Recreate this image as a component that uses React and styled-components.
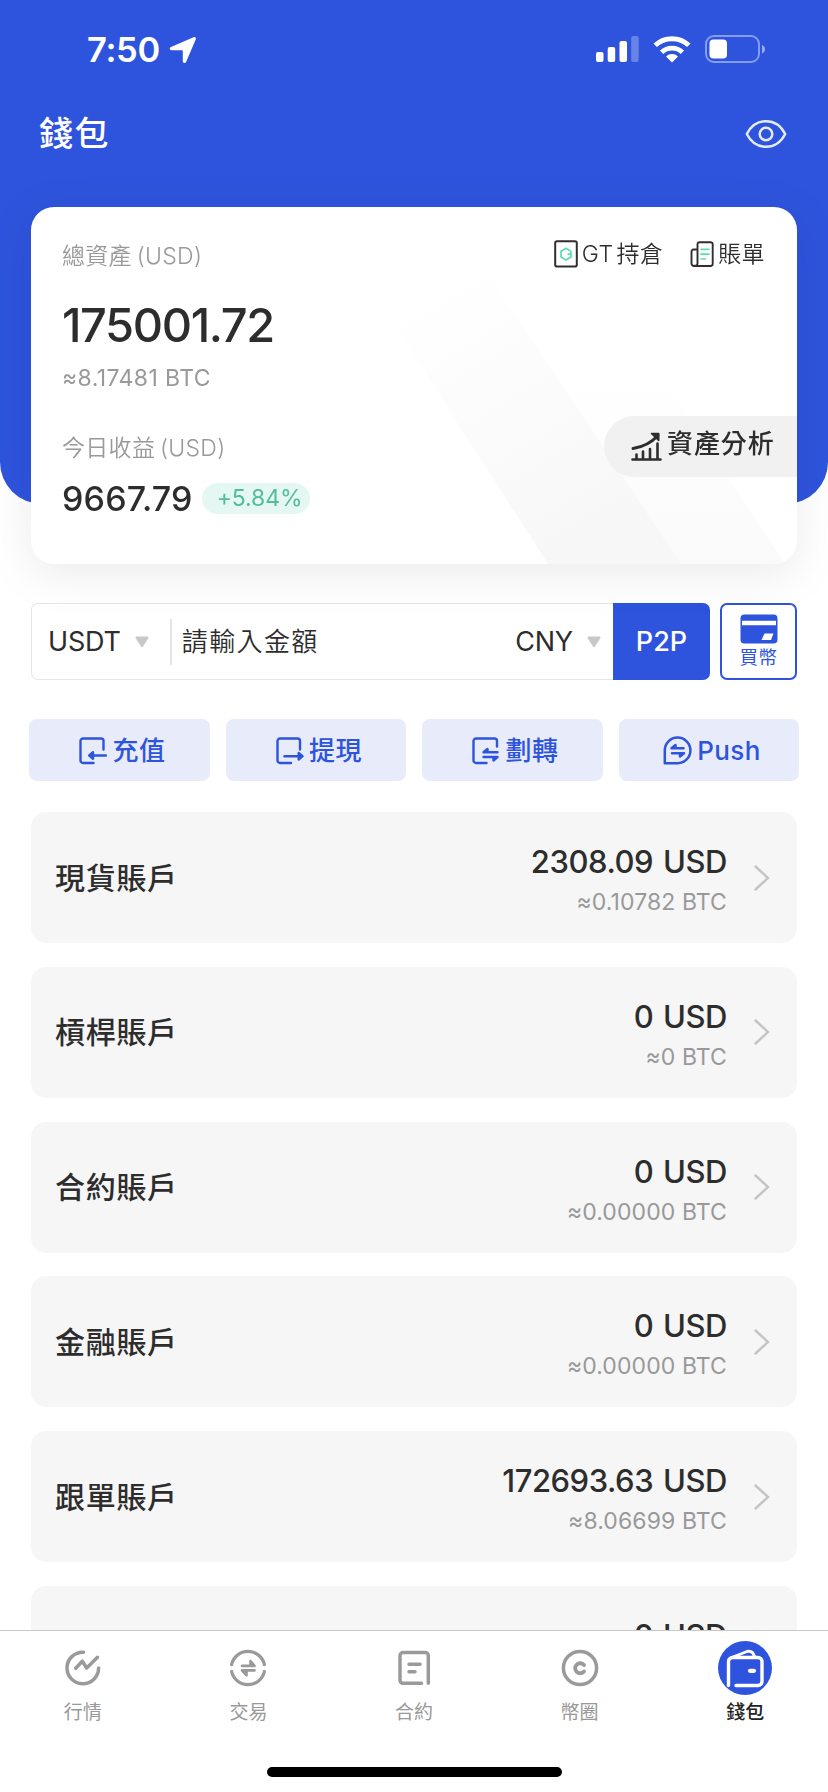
import styled, { createGlobalStyle } from 'styled-components'

const blue = '#2e54dd'
const dark = '#2d2d2d'
const grey = '#999'

const GlobalStyle = createGlobalStyle`
  body {
    margin: 0;
    background: #fff;
    font-family: Inter, 'Noto Sans CJK TC', sans-serif;
    color: ${dark};
  }
  svg {
    display: block;
    flex: none;
  }
`

const Screen = styled.div`
  display: flex;
  flex-direction: column;
  width: 828px;
  height: 1792px;
  overflow: hidden;
`

const Content = styled.main`
  flex: 1;
  min-height: 0;
  overflow: hidden;
`

const Header = styled.header`
  height: 504px;
  background: ${blue};
  border-radius: 0 0 42px 42px;
  color: white;
`

const StatusBar = styled.div`
  display: flex;
  align-items: center;
  justify-content: space-between;
  height: 98px;
  padding: 0 62px 0 87px;
`

const Time = styled.div`
  display: flex;
  align-items: center;
  gap: 9px;
  font-size: 34.5px;
  font-weight: 600;
  line-height: 40px;
  letter-spacing: -0.3px;
  padding-top: 2px;
`

const StatusIcons = styled.div`
  display: flex;
  align-items: center;
  gap: 14px;
`

const TitleRow = styled.div`
  display: flex;
  align-items: center;
  justify-content: space-between;
  height: 72px;
  padding: 0 41px 0 39px;
`

const Title = styled.h1`
  margin: 0;
  font-size: 34px;
  font-weight: 500;
  letter-spacing: 1.5px;
  line-height: 40px;
`

const Card = styled.section`
  position: relative;
  display: flex;
  justify-content: space-between;
  height: 357px;
  margin: -297px 31px 0;
  border-radius: 23px;
  background: white;
  overflow: hidden;
`

const CardShadow = styled.div`
  filter: drop-shadow(0 10px 22px rgba(0, 0, 0, 0.08));
`

const Stripes = styled.svg`
  position: absolute;
  right: 0;
  bottom: 0;
`

const Balance = styled.div`
  position: relative;
  padding: 33px 0 0 31px;
`

const Label = styled.div`
  height: 32px;
  font-size: 23px;
  font-weight: 350;
  line-height: 32px;
  letter-spacing: 0.3px;
  word-spacing: -2px;
  color: ${grey};
`

const Total = styled.div`
  margin-top: 23px;
  font-size: 47px;
  font-weight: 500;
  line-height: 60px;
  letter-spacing: -1.4px;
`

const Approx = styled.div`
  font-size: 23px;
  font-weight: 400;
  line-height: 30px;
  letter-spacing: 0.1px;
  color: ${grey};
`

const TotalApprox = styled(Approx)`
  margin: 8px 0 39px;
  letter-spacing: 0.4px;
`

const Profit = styled.div`
  display: flex;
  align-items: center;
  gap: 9px;
  height: 32px;
  margin-top: 18px;
  font-size: 34px;
  font-weight: 500;
  letter-spacing: 0.15px;
`

const Rate = styled.span`
  width: 108px;
  padding-left: 15px;
  box-sizing: border-box;
  border-radius: 16px;
  background: #e5f7f2;
  color: #52bd98;
  font-size: 23px;
  font-weight: 400;
  line-height: 31px;
  letter-spacing: -0.1px;
`

const CardSide = styled.div`
  position: relative;
  display: flex;
  flex-direction: column;
  align-items: flex-end;
  padding-top: 31px;
`

const CardLinks = styled.div`
  display: flex;
  gap: 27px;
  padding-right: 32px;
`

const CardLink = styled.a`
  display: flex;
  align-items: center;
  gap: 4px;
  font-size: 23px;
  font-weight: 350;
  line-height: 32px;
  letter-spacing: 0.4px;
  word-spacing: -4px;
`

const Analysis = styled.button`
  display: flex;
  align-items: center;
  gap: 5px;
  width: 193px;
  height: 61px;
  margin-top: 146px;
  padding: 0 0 0 27px;
  border: none;
  border-radius: 31px 0 0 31px;
  background: #f1f1f1;
  color: ${dark};
  font: 500 26px/50px Inter, 'Noto Sans CJK TC', sans-serif;
  letter-spacing: 0.9px;

  span {
    margin-top: -5px;
  }
`

const Trade = styled.div`
  display: flex;
  gap: 10px;
  height: 77px;
  margin: 39px 31px 0;
`

const Exchange = styled.div`
  display: flex;
  align-items: center;
  flex: 1;
  box-sizing: border-box;
  border: 1px solid #e6e6e6;
  border-right: none;
  border-radius: 7px;
  font-size: 27px;
`

const Currency = styled.div`
  display: flex;
  align-items: center;
  gap: 14px;
  padding-left: ${({ $indent }) => $indent}px;
  letter-spacing: -0.2px;
`

const Amount = styled.div`
  flex: 1;
  height: 46px;
  margin-left: 21px;
  padding-left: 10px;
  border-left: 2px solid #e4e4e4;
  font-size: 26px;
  font-weight: 350;
  line-height: 46px;
  letter-spacing: 1.4px;
`

const P2P = styled.button`
  width: 97px;
  height: 77px;
  margin: -1px 0 -1px 12px;
  border: none;
  border-radius: 0 7px 7px 0;
  background: ${blue};
  color: white;
  font: 450 27px Inter, sans-serif;
`

const BuyCoin = styled.button`
  display: flex;
  flex-direction: column;
  align-items: center;
  width: 77px;
  box-sizing: border-box;
  padding: 9px 0 0;
  border: 2px solid ${blue};
  border-radius: 7px;
  background: white;
  color: ${blue};
  font: 400 18.5px/26px Inter, 'Noto Sans CJK TC', sans-serif;
  letter-spacing: 0.4px;
`

const Actions = styled.div`
  display: grid;
  grid-template-columns: repeat(4, 1fr);
  gap: 16px;
  margin: 39px 29px 0;
`

const Action = styled.button`
  display: flex;
  align-items: center;
  justify-content: center;
  gap: 5.5px;
  height: 62px;
  padding: 1px 0 0 6px;
  border: none;
  border-radius: 8px;
  background: #e8ebf9;
  color: ${blue};
  font: 450 26px/30px Inter, 'Noto Sans CJK TC', sans-serif;
  letter-spacing: 0.4px;
`

const Accounts = styled.div`
  display: flex;
  flex-direction: column;
  gap: 23.8px;
  margin: 31px 31px 0;
`

const Account = styled.div`
  display: flex;
  align-items: center;
  height: 131px;
  box-sizing: border-box;
  padding: 0 27px 0 24px;
  border-radius: 15px;
  background: #f6f6f6;
`

const AccountName = styled.div`
  flex: 1;
  font-size: 30px;
  font-weight: 500;
  line-height: 40px;
  letter-spacing: 0.7px;
`

const AccountValue = styled.div`
  margin-right: 27px;
  padding-top: 1px;
  text-align: right;
`

const Usd = styled.div`
  margin-bottom: 2px;
  font-size: 31px;
  font-weight: 450;
  line-height: 46px;
  letter-spacing: -0.45px;
  word-spacing: 2px;
`

const TabBar = styled.nav`
  display: flex;
  flex-wrap: wrap;
  align-content: flex-start;
  flex: none;
  height: 162px;
  box-sizing: border-box;
  border-top: 1px solid #c9c9c9;
  background: white;
`

const Tab = styled.a`
  display: flex;
  flex-direction: column;
  align-items: center;
  width: 20%;
  height: 136px;
  padding-top: 10px;
  box-sizing: border-box;
  color: ${({ $active }) => ($active ? '#222' : grey)};
  font-size: 19px;
  font-weight: ${({ $active }) => ($active ? 500 : 400)};
  line-height: 36px;
`

const TabIcon = styled.div`
  width: 54px;
  height: 54px;
  border-radius: 50%;
  background: ${({ $active }) => ($active ? blue : 'transparent')};
  color: ${({ $active }) => ($active ? 'white' : '#9a9a9a')};
`

const HomeIndicator = styled.div`
  width: 295px;
  height: 10px;
  margin: 0 auto;
  border-radius: 5px;
  background: black;
`

const Stroke = ({ size = 28, width = 2.4, children }) => (
  <svg
    width={size}
    height={size}
    viewBox={`0 0 ${size} ${size}`}
    fill="none"
    stroke="currentColor"
    strokeWidth={width}
    strokeLinecap="round"
    strokeLinejoin="round"
  >
    {children}
  </svg>
)

const LocationIcon = () => (
  <svg width="28" height="28" viewBox="0 0 28 28" fill="white">
    <path d="M24.5 1.2c1.7-.6 2.9.6 2.2 2.2L17.2 25.7c-.8 1.9-3.4 1.4-3.4-.5V15.4c0-.8-.3-1.1-1.1-1.1H2.6C.5 14.3.1 11.9 2 11.1z" />
  </svg>
)

const SignalIcon = () => (
  <svg width="43" height="28" viewBox="0 0 43 28" fill="white">
    <rect x="0" y="17" width="7.5" height="10" rx="2" />
    <rect x="11.7" y="12" width="7.5" height="15" rx="2" />
    <rect x="23.5" y="6" width="7.5" height="21" rx="2" />
    <rect x="35.2" y="1" width="7.5" height="26" rx="2" opacity="0.28" />
  </svg>
)

const WifiIcon = () => (
  <svg width="38" height="28" viewBox="0 0 38 28" fill="none" stroke="white">
    <path d="M2.2 10.3A24.5 24.5 0 0 1 35.8 10.3" strokeWidth="5" />
    <path d="M8.6 17.2A15.3 15.3 0 0 1 29.4 17.2" strokeWidth="4.8" />
    <path d="M19 27.5l-6-6a8.7 8.7 0 0 1 12 0z" fill="white" stroke="none" />
  </svg>
)

const BatteryIcon = () => (
  <svg width="61" height="28" viewBox="0 0 61 28" fill="none">
    <rect x="1" y="1" width="53" height="26" rx="8" stroke="white" strokeOpacity="0.42" strokeWidth="2" />
    <rect x="4.5" y="4.5" width="17.5" height="19" rx="4" fill="white" />
    <path d="M57 10c4 1.2 4 7.2 0 8.5z" fill="white" opacity="0.5" />
  </svg>
)

const EyeIcon = () => (
  <svg width="42" height="30" viewBox="0 0 42 30" fill="none" stroke="#e4ebff" strokeWidth="2.5">
    <path d="M1.8 15C6 6.8 12.6 2.2 21 2.2S36 6.800 40.200 15C36 23.200 29.400 27.800 21 27.800S6 23.200 1.800 15z" strokeLinejoin="round" />
    <circle cx="21" cy="15" r="6.3" />
  </svg>
)

const GtIcon = () => (
  <svg width="24" height="28" viewBox="0 0 24 28" fill="none">
    <rect x="1.2" y="1.2" width="21.6" height="25.3" rx="1.8" stroke="#332c30" strokeWidth="2" />
    <path d="M17 11.2l-5-3-5 3v5.8l5 3 5-3v-2.8h-3.5M17 11.2v2" stroke="#5edbb0" strokeWidth="1.7" />
  </svg>
)

const BillIcon = () => (
  <svg width="24" height="28" viewBox="0 0 24 28" fill="none" strokeLinecap="round">
    <path d="M7.5 9.5H3.5a2 2 0 0 0-2 2v12a2.5 2.5 0 0 0 2.5 2.5H20.5a2.2 2.2 0 0 0 2.2-2.2V4.2A2 2 0 0 0 20.7 2.2H9.5a2 2 0 0 0-2 2v19.5a2.3 2.3 0 0 1-3 2" stroke="#332c30" strokeWidth="1.9" />
    <path d="M11 9.3h8M11 14.2h8M11 19h4.5" stroke="#5edbb0" strokeWidth="1.7" />
  </svg>
)

const AnalysisIcon = () => (
  <Stroke size={31} width={2.6}>
    <path d="M1.5 28.5h28M5.5 28v-4.5M12 28v-7.5M19 28v-10M26.5 28V12.5" />
    <path d="M2 17.5C12 16 20 12 27 4.5" strokeWidth="2.9" />
    <path d="M20.5 2.5h7.2v7z" fill="currentColor" strokeWidth="1.6" />
  </Stroke>
)

const DownArrow = () => (
  <svg width="14" height="12" viewBox="0 0 14 12">
    <path d="M1.5.5h11q1.5.3.8 1.8L8 10.5q-1 1-2 0L.7 2.3Q0 .8 1.5.5z" fill="#c8c8c8" />
  </svg>
)

const BankCardIcon = () => (
  <svg width="38" height="30" viewBox="0 0 38 30">
    <rect x="0.5" y="0.5" width="37" height="29" rx="4" fill={blue} />
    <path d="M2 6.8h34v4.5H2zM24.5 19.5h9L31 26h-9.5z" fill="white" />
  </svg>
)

const DepositIcon = () => (
  <Stroke>
    <path d="M24.5 12.5V4a2.5 2.5 0 0 0-2.5-2.5H4A2.5 2.5 0 0 0 1.5 4v19.5A2.5 2.5 0 0 0 4 26h10.5" />
    <path d="M26.8 18.5H11" />
    <path d="M14 15.2L10.2 18.5 14 21.8z" fill="currentColor" />
  </Stroke>
)

const WithdrawIcon = () => (
  <Stroke>
    <path d="M24 12.5V4a2.5 2.5 0 0 0-2.5-2.5H4A2.5 2.5 0 0 0 1.5 4v19.5A2.5 2.5 0 0 0 4 26h11" />
    <path d="M8.5 19.2H25" />
    <path d="M22.7 16L26.5 19.2 22.7 22.5z" fill="currentColor" />
  </Stroke>
)

const TransferIcon = () => (
  <Stroke>
    <path d="M25 9.5V4a2.5 2.5 0 0 0-2.5-2.5H4A2.5 2.5 0 0 0 1.5 4v19.5A2.5 2.5 0 0 0 4 26h10.5" />
    <path d="M25.5 15.3H11.5L15.5 12v3.3" fill="currentColor" />
    <path d="M11.5 20H25.5L21.5 23.5V20" fill="currentColor" />
  </Stroke>
)

const PushIcon = () => (
  <Stroke size={29} width={2.5}>
    <path d="M1.8 27.2V14.5A12.8 12.8 0 1 1 14.6 27.2z" />
    <path d="M20.5 12.2H8.5L12.5 9v3.2" fill="currentColor" />
    <path d="M9 17.2H21L17 20.5V17.2" fill="currentColor" />
  </Stroke>
)

const Chevron = () => (
  <svg width="16" height="26" viewBox="0 0 16 26" fill="none" stroke="#c4c4c4" strokeWidth="2.4">
    <path d="M1.5 1.5L14 13 1.5 24.5" strokeLinecap="round" />
  </svg>
)

const MarketIcon = () => (
  <Stroke size={54} width={3.5}>
    <path d="M27.5 11.2A15.8 15.8 0 1 0 42.6 27" />
    <path d="M19.7 27.3L26.3 20.2 30.7 27 41.5 16.3" />
  </Stroke>
)

const TradeIcon = () => (
  <Stroke size={54} width={3.3}>
    <path d="M10.6 23.6A16.8 16.8 0 0 1 43.4 23.6" />
    <path d="M10.6 30.5A16.8 16.8 0 0 0 43.4 30.5" />
    <path d="M21 24.9H33.5L29.5 20v4.9" fill="currentColor" strokeWidth="2.6" />
    <path d="M33.5 29.4H21L25.5 34.3V29.4" fill="currentColor" strokeWidth="2.6" />
  </Stroke>
)

const ContractIcon = () => (
  <Stroke size={54} width={3.5}>
    <path d="M41.3 42.3V14.5a3 3 0 0 0-3-3H16a3 3 0 0 0-3 3V39.3a3 3 0 0 0 3 3H34.5" />
    <path d="M22 23.2H33M22 30.7H28" />
  </Stroke>
)

const CircleIcon = () => (
  <Stroke size={54} width={3.5}>
    <circle cx="27" cy="27" r="16.6" />
    <path d="M31 24A5 5 0 1 0 31 30.5" strokeWidth="3.8" />
  </Stroke>
)

const WalletIcon = () => (
  <Stroke size={54} width={3.4}>
    <path d="M10.5 44.5V20.5a4 4 0 0 1 4-4H40a4 4 0 0 1 4 4V40.5a4 4 0 0 1-4 4H18" />
    <path d="M13 16.8L29 10.5Q34.5 9 36.5 15.5" strokeWidth="2.9" />
    <path d="M32 29.8H36" strokeWidth="4.2" />
  </Stroke>
)

const accounts = [
  { name: '現貨賬戶', usd: '2308.09', btc: '0.10782' },
  { name: '槓桿賬戶', usd: '0', btc: '0' },
  { name: '合約賬戶', usd: '0', btc: '0.00000' },
  { name: '金融賬戶', usd: '0', btc: '0.00000' },
  { name: '跟單賬戶', usd: '172693.63', btc: '8.06699' },
  { name: '', usd: '0', btc: '0' },
]

const tabs = [
  { label: '行情', Icon: MarketIcon },
  { label: '交易', Icon: TradeIcon },
  { label: '合約', Icon: ContractIcon },
  { label: '幣圈', Icon: CircleIcon },
  { label: '錢包', Icon: WalletIcon, active: true },
]

const BalanceCard = () => (
  <CardShadow>
    <Card>
      <Stripes width="400" height="300" viewBox="0 0 400 300">
        <defs>
          <linearGradient id="wide" x1="0" y1="0" x2="0.6" y2="1">
            <stop offset="0.15" stopColor="#f7f7f7" stopOpacity="0" />
            <stop offset="1" stopColor="#f7f7f7" />
          </linearGradient>
          <linearGradient id="narrow" x1="0" y1="0" x2="0" y2="1">
            <stop offset="0.1" stopColor="#fafafa" stopOpacity="0" />
            <stop offset="1" stopColor="#fafafa" />
          </linearGradient>
        </defs>
        <path d="M150 100L248 88 388 300H284z" fill="url(#narrow)" />
        <path d="M-20 34L84 0 284 300H151z" fill="url(#wide)" />
      </Stripes>
      <Balance>
        <Label>總資產 (USD)</Label>
        <Total>175001.72</Total>
        <TotalApprox>≈8.17481 BTC</TotalApprox>
        <Label>今日收益 (USD)</Label>
        <Profit>
          9667.79 <Rate>+5.84%</Rate>
        </Profit>
      </Balance>
      <CardSide>
        <CardLinks>
          <CardLink>
            <GtIcon />
            GT 持倉
          </CardLink>
          <CardLink>
            <BillIcon />
            賬單
          </CardLink>
        </CardLinks>
        <Analysis>
          <AnalysisIcon />
          <span>資產分析</span>
        </Analysis>
      </CardSide>
    </Card>
  </CardShadow>
)

const App = () => (
  <Screen>
    <GlobalStyle />
    <Content>
      <Header>
        <StatusBar>
          <Time>
            7:50
            <LocationIcon />
          </Time>
          <StatusIcons>
            <SignalIcon />
            <WifiIcon />
            <BatteryIcon />
          </StatusIcons>
        </StatusBar>
        <TitleRow>
          <Title>錢包</Title>
          <EyeIcon />
        </TitleRow>
      </Header>
      <BalanceCard />
      <Trade>
        <Exchange>
          <Currency $indent={16}>
            USDT <DownArrow />
          </Currency>
          <Amount>請輸入金額</Amount>
          <Currency $indent={0}>
            CNY <DownArrow />
          </Currency>
          <P2P>P2P</P2P>
        </Exchange>
        <BuyCoin>
          <BankCardIcon />
          買幣
        </BuyCoin>
      </Trade>
      <Actions>
        <Action>
          <DepositIcon />
          充值
        </Action>
        <Action>
          <WithdrawIcon />
          提現
        </Action>
        <Action>
          <TransferIcon />
          劃轉
        </Action>
        <Action>
          <PushIcon />
          Push
        </Action>
      </Actions>
      <Accounts>
        {accounts.map(({ name, usd, btc }, i) => (
          <Account key={i}>
            <AccountName>{name}</AccountName>
            <AccountValue>
              <Usd>{usd} USD</Usd>
              <Approx>≈{btc} BTC</Approx>
            </AccountValue>
            <Chevron />
          </Account>
        ))}
      </Accounts>
    </Content>
    <TabBar>
      {tabs.map(({ label, Icon, active }) => (
        <Tab key={label} $active={active}>
          <TabIcon $active={active}>
            <Icon />
          </TabIcon>
          {label}
        </Tab>
      ))}
      <HomeIndicator />
    </TabBar>
  </Screen>
)

export default App
